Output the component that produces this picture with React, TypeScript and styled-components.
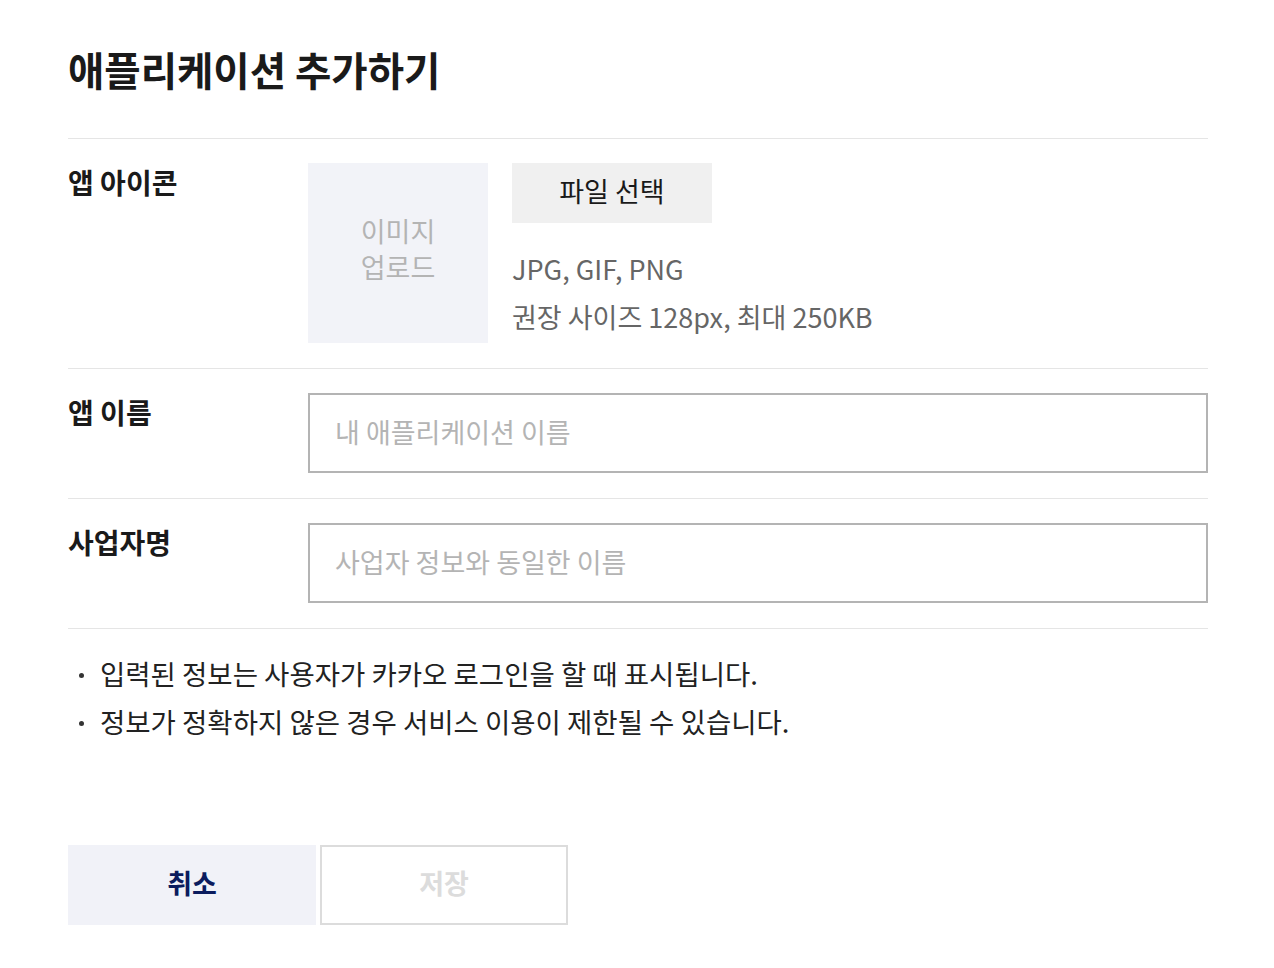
import styled, { createGlobalStyle } from "styled-components";

const GlobalStyle = createGlobalStyle`
  body {
    margin: 0;
    background: #fff;
    font-family: "Noto Sans CJK KR", "Noto Sans", sans-serif;
    color: #222;
  }
`;

const Container = styled.div`
  width: 1140px;
  padding: 42px 0 0 68px;
`;

const Title = styled.h1`
  margin: 0 0 42px;
  font-size: 39.5px;
  line-height: 54px;
  font-weight: 700;
  color: #1a1a1a;
`;

const Row = styled.div`
  display: grid;
  grid-template-columns: 240px 1fr;
  padding: 24px 0 25px;
  border-top: 1px solid #e5e5e5;
  &:last-of-type {
    border-bottom: 1px solid #e5e5e5;
  }
`;

const Label = styled.div`
  font-size: 28px;
  line-height: 36px;
  font-weight: 700;
  color: #1a1a1a;
  padding-top: 1px;
`;

const IconField = styled.div`
  display: flex;
  gap: 24px;
`;

const ImageBox = styled.div`
  box-sizing: border-box;
  width: 180px;
  height: 180px;
  padding-bottom: 8px;
  background: #f2f3f8;
  display: flex;
  align-items: center;
  justify-content: center;
  text-align: center;
  font-size: 27px;
  line-height: 36px;
  color: #b4b4b4;
`;

const FileCol = styled.div`
  display: flex;
  flex-direction: column;
  align-items: flex-start;
`;

const FileButton = styled.button`
  box-sizing: border-box;
  width: 200px;
  height: 60px;
  border: none;
  background: #f0f0f0;
  font-family: inherit;
  font-size: 27px;
  color: #1a1a1a;
  padding: 0 0 6px;
  margin-bottom: 22px;
`;

const Hint = styled.p`
  margin: 0;
  font-size: 27px;
  line-height: 48px;
  color: #666;
`;

const Input = styled.input`
  box-sizing: border-box;
  width: 100%;
  height: 80px;
  border: 2px solid #b4b4b4;
  padding: 0 25px 4px;
  font-family: inherit;
  font-size: 27px;
  color: #222;
  outline: none;
  &::placeholder {
    color: #b4b4b4;
  }
`;

const Notes = styled.ul`
  list-style: none;
  margin: 20px 0 0;
  padding: 0;
`;

const Note = styled.li`
  position: relative;
  padding-left: 32px;
  font-size: 27.5px;
  line-height: 48px;
  color: #222;
  &::before {
    content: "";
    position: absolute;
    left: 11px;
    top: 24px;
    width: 5px;
    height: 5px;
    border-radius: 50%;
    background: #333;
  }
`;

const Actions = styled.div`
  display: flex;
  gap: 4px;
  margin-top: 100px;
`;

const ActionButton = styled.button<{ $primary?: boolean }>`
  box-sizing: border-box;
  width: 248px;
  height: 80px;
  padding: 0 0 5px;
  font-family: inherit;
  font-size: 27px;
  font-weight: 700;
  background: ${(p) => (p.$primary ? "#f1f2f8" : "#fff")};
  color: ${(p) => (p.$primary ? "#0b1c5e" : "#dcdcdc")};
  border: ${(p) => (p.$primary ? "none" : "2px solid #dcdcdc")};
`;

export default function App() {
  return (
    <>
      <GlobalStyle />
      <Container>
        <Title>애플리케이션 추가하기</Title>

        <div>
          <Row>
            <Label>앱 아이콘</Label>
            <IconField>
              <ImageBox>
                이미지
                <br />
                업로드
              </ImageBox>
              <FileCol>
                <FileButton>파일 선택</FileButton>
                <Hint>JPG, GIF, PNG</Hint>
                <Hint>권장 사이즈 128px, 최대 250KB</Hint>
              </FileCol>
            </IconField>
          </Row>
          <Row>
            <Label>앱 이름</Label>
            <Input placeholder="내 애플리케이션 이름" />
          </Row>
          <Row>
            <Label>사업자명</Label>
            <Input placeholder="사업자 정보와 동일한 이름" />
          </Row>
        </div>

        <Notes>
          <Note>입력된 정보는 사용자가 카카오 로그인을 할 때 표시됩니다.</Note>
          <Note>정보가 정확하지 않은 경우 서비스 이용이 제한될 수 있습니다.</Note>
        </Notes>

        <Actions>
          <ActionButton $primary>취소</ActionButton>
          <ActionButton disabled>저장</ActionButton>
        </Actions>
      </Container>
    </>
  );
}
